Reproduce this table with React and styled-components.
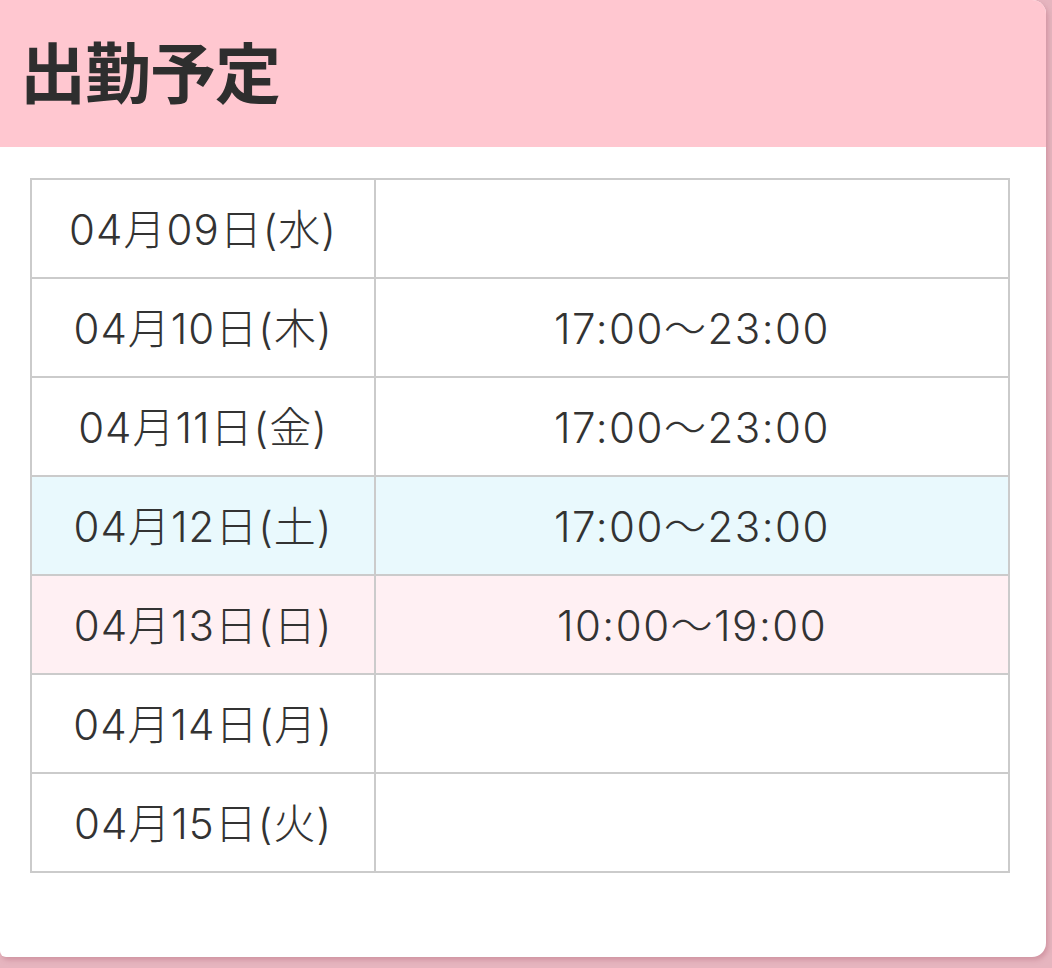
import React from "react";
import styled, { createGlobalStyle } from "styled-components";

const schedule = [
  { date: "04月09日(水)", time: "" },
  { date: "04月10日(木)", time: "17:00〜23:00" },
  { date: "04月11日(金)", time: "17:00〜23:00" },
  { date: "04月12日(土)", time: "17:00〜23:00", day: "sat" },
  { date: "04月13日(日)", time: "10:00〜19:00", day: "sun" },
  { date: "04月14日(月)", time: "" },
  { date: "04月15日(火)", time: "" },
];

const App = () => {
  return (
    <>
      <GlobalStyle />
      <Page>
        <Card>
          <Header>
            <Title>出勤予定</Title>
          </Header>
          <Body>
            <Table>
              <tbody>
                {schedule.map((row) => (
                  <Row key={row.date} $day={row.day}>
                    <DateCell>{row.date}</DateCell>
                    <TimeCell>{row.time}</TimeCell>
                  </Row>
                ))}
              </tbody>
            </Table>
          </Body>
        </Card>
      </Page>
    </>
  );
};

export default App;

// Styled Components

const GlobalStyle = createGlobalStyle`
  html, body {
    margin: 0;
    padding: 0;
    background: #e6b5bf;
  }

  body {
    font-family: "Noto Sans CJK JP", "Noto Sans", sans-serif;
    color: #333333;
  }
`;

const Page = styled.div`
  width: 1052px;
  height: 968px;
  overflow: hidden;
`;

const Card = styled.div`
  width: 1046px;
  height: 957px;
  background: #ffffff;
  border-radius: 0 14px 14px 6px;
  overflow: hidden;
  box-shadow: 2px 3px 5px rgba(170, 90, 110, 0.35);
`;

const Header = styled.div`
  height: 147px;
  background: #ffc7d0;
  display: flex;
  align-items: center;
  padding: 0 0 10px 20px;
  box-sizing: border-box;
`;

const Title = styled.h2`
  margin: 0;
  font-size: 66px;
  font-weight: 700;
  color: #2e2e2e;
  letter-spacing: -1px;
`;

const Body = styled.div`
  padding: 31px 0 0 30px;
`;

const Table = styled.table`
  width: 980px;
  border-collapse: collapse;
  border: 2px solid #cbcbcb;
`;

const Row = styled.tr`
  height: 99px;
  background: ${({ $day }) =>
    $day === "sat" ? "#e9f9fd" : $day === "sun" ? "#fff0f3" : "#ffffff"};
`;

const Cell = styled.td`
  border: 2px solid #cbcbcb;
  text-align: center;
  font-family: "Inter", "Noto Sans CJK JP", sans-serif;
  font-size: 42px;
  font-weight: 300;
  letter-spacing: 1px;
  color: #333333;
  padding: 0 0 4px;
`;

const DateCell = styled(Cell)`
  width: 342px;
`;

const TimeCell = styled(Cell)`
  letter-spacing: 1.5px;
`;
